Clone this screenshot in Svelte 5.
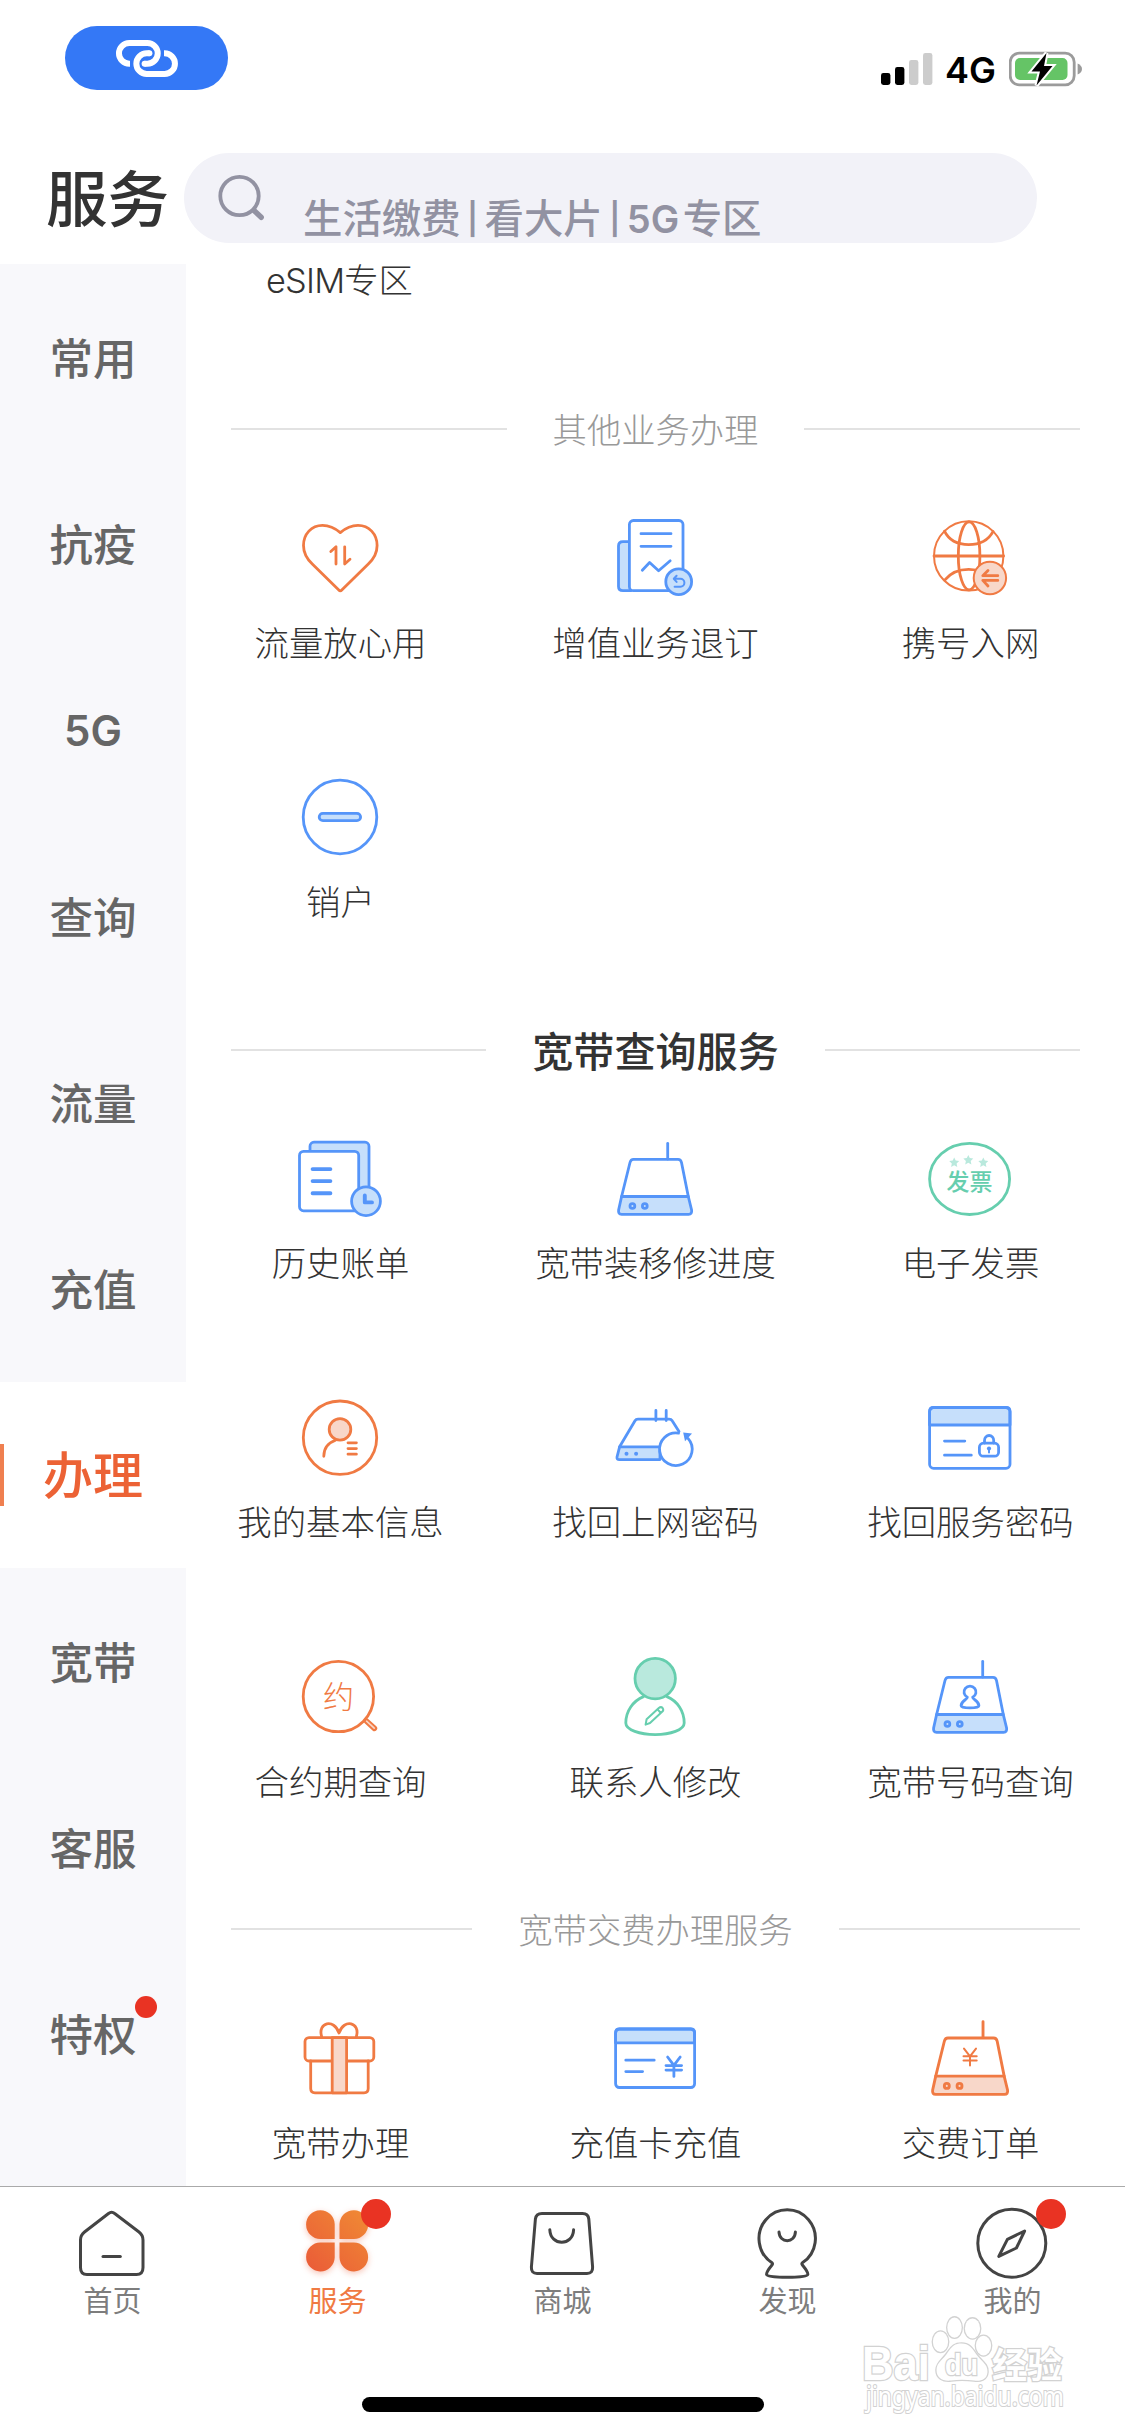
<script>
  const sidebar = ['常用', '抗疫', '5G', '查询', '流量', '充值', '办理', '宽带', '客服', '特权'];
  const active = '办理';

  const sections = [
    {
      title: '其他业务办理',
      items: [
        { icon: 'heart', label: '流量放心用' },
        { icon: 'docReturn', label: '增值业务退订' },
        { icon: 'globe', label: '携号入网' },
        { icon: 'minus', label: '销户' }
      ]
    },
    {
      title: '宽带查询服务',
      strong: true,
      items: [
        { icon: 'history', label: '历史账单' },
        { icon: 'router', label: '宽带装移修进度' },
        { icon: 'invoice', label: '电子发票' },
        { icon: 'profile', label: '我的基本信息' },
        { icon: 'routerReset', label: '找回上网密码' },
        { icon: 'lockCard', label: '找回服务密码' },
        { icon: 'contract', label: '合约期查询' },
        { icon: 'contact', label: '联系人修改' },
        { icon: 'routerUser', label: '宽带号码查询' }
      ]
    },
    {
      title: '宽带交费办理服务',
      items: [
        { icon: 'gift', label: '宽带办理' },
        { icon: 'payCard', label: '充值卡充值' },
        { icon: 'routerPay', label: '交费订单' }
      ]
    }
  ];

  const tabs = [
    { icon: 'home', label: '首页' },
    { icon: 'clover', label: '服务', on: true, dot: true },
    { icon: 'bag', label: '商城' },
    { icon: 'discover', label: '发现' },
    { icon: 'compass', label: '我的', dot: true }
  ];

  const star = 'M0-5 1.5-1.8 5-1.4 2.4 1 3.1 4.5 0 2.8-3.1 4.5-2.4 1-5-1.4-1.5-1.8Z';
</script>

{#snippet routerBody()}
  <path d="M12.6 63.5 H79.3 L82.6 77 Q83.2 81.3 79.6 81.3 H12.6 Q9 81.3 9.6 77 Z" class="tint" />
  <path d="M12.6 63.5 L21 29.5 Q21.8 26.3 24.5 26.3 H69 Q71.8 26.3 72.5 29.5 L79.3 63.5" />
  <path d="M58.7 10.5V26" />
  <circle cx="23.4" cy="73" r="2.4" />
  <circle cx="35.8" cy="73" r="2.4" />
{/snippet}

{#snippet icon(name)}
  {#if name === 'heart'}
    <svg class="ico orange" viewBox="0 0 90 90">
      <path d="M46.3 20.6C41 16 35 13.3 28.5 13.3 17.5 13.3 9.5 22 9.5 33.5 9.5 41 13 47 18.3 52L44.8 78Q46.3 79.6 47.8 78L74.3 52C79.6 47 83.1 41 83.1 33.5 83.1 22 75 13.3 64 13.3 57.5 13.3 51.6 16 46.3 20.6Z" />
      <path d="M36.8 39.5 42 34.8V52M50.7 34.8V52L56 47.3" />
    </svg>
  {:else if name === 'docReturn'}
    <svg class="ico blue" viewBox="0 0 90 90">
      <path class="tint" d="M20.5 29.7H14Q9.5 29.7 9.5 34V74.5Q9.5 78.7 14 78.7H22Z" />
      <rect class="paper" x="20.4" y="8.5" width="53.6" height="70.2" rx="4" />
      <path d="M32 21.7H62M32 34.3H62M33.3 58.2 40.6 50.5 49.6 58.8 61.2 48.8" />
      <circle class="tint" cx="69.7" cy="69.7" r="12.9" />
      <path d="M67.6 63.8 64.8 66.8 67.6 69.9M65.2 66.8H71.4A4 4 0 0 1 71.4 74.8H65.6" stroke-width="2" />
    </svg>
  {:else if name === 'globe'}
    <svg class="ico orange" viewBox="0 0 90 90">
      <circle class="thin" cx="44.7" cy="43.9" r="34.7" />
      <ellipse cx="45.1" cy="43.9" rx="10.8" ry="34" />
      <path d="M10 44H79.6M20.5 19.2Q27 32.6 44.7 32.6 62 32.6 69 19.6M21.2 67.7Q29.5 57.4 44.7 57.4 60 57.4 68 67" />
      <circle class="tint thin" cx="65.9" cy="66" r="16.2" />
      <path d="M73.8 63.7H58.8L64 58.4M73.8 68.4H58.8L64 74" />
    </svg>
  {:else if name === 'minus'}
    <svg class="ico blue" viewBox="0 0 90 90">
      <circle cx="46" cy="46" r="36.8" />
      <rect class="tint" x="25.2" y="42.3" width="41.4" height="7.4" rx="3.7" />
    </svg>
  {:else if name === 'history'}
    <svg class="ico blue" viewBox="0 0 90 90">
      <rect class="tint" x="16" y="9.2" width="59" height="62" rx="4" />
      <rect class="paper" x="5.5" y="18.4" width="59.2" height="59.4" rx="4" />
      <path class="thick" d="M18.6 36.1H36.4M18.6 48.1H36.4M18.6 60.2H36.4" />
      <circle class="tint" cx="72" cy="68.2" r="14.4" />
      <path class="thick" d="M70.8 62.5V69.4H78" />
    </svg>
  {:else if name === 'router'}
    <svg class="ico blue" viewBox="0 0 90 90">{@render routerBody()}</svg>
  {:else if name === 'invoice'}
    <svg class="ico green" viewBox="0 0 90 90">
      <ellipse cx="45.6" cy="45.9" rx="40" ry="35.6" />
      <g class="stars">
        <path d={star} transform="translate(30.2 29.4)" />
        <path d={star} transform="translate(44.3 26.9)" />
        <path d={star} transform="translate(59.3 29.4)" />
      </g>
      <text x="45.5" y="57" font-size="23" font-weight="500">发票</text>
    </svg>
  {:else if name === 'profile'}
    <svg class="ico orange" viewBox="0 0 90 90">
      <circle cx="46" cy="45.7" r="36.7" />
      <circle class="tint" cx="46" cy="37.4" r="10.8" />
      <path d="M29.8 64.3Q29.8 52.5 41.5 48.3M54 50.8H62.4M54 56.6H62.4M54 62.2H62.4" />
    </svg>
  {:else if name === 'routerReset'}
    <svg class="ico blue" viewBox="0 0 90 90">
      <path class="tint" d="M10.6 54.8H51V67.6H10.4Q7.6 67.6 8 65Z" />
      <path d="M10.6 54.8 26 28.8Q27 27.1 29 27.1H60Q62.2 27.1 63.2 28.8L70 39.5M46.9 18.5V28.6M57.2 18.5V28.6" />
      <path class="paper" d="M69.5 41.2A16.3 16.3 0 1 0 79 46.4" />
      <path class="solid bare" d="M74.2 40.4 83 41.6 76 49.2Z" />
      <circle class="solid bare" cx="17.5" cy="61.8" r="2" />
      <circle class="solid bare" cx="27.1" cy="61.8" r="2" />
    </svg>
  {:else if name === 'lockCard'}
    <svg class="ico blue" viewBox="0 0 90 90">
      <path class="tint" d="M5.6 33V19.4Q5.6 15.5 9.5 15.5H82Q86 15.5 86 19.4V33Z" />
      <rect x="5.6" y="15.5" width="80.4" height="60.8" rx="4" />
      <path d="M20.5 49.1H40.8M20.5 63.2H47.3M60.5 51V48.5A4.6 5 0 0 1 69.7 48.5V51" />
      <rect x="55.4" y="51.2" width="19.2" height="13" rx="4" />
      <circle class="solid bare" cx="65" cy="56.6" r="2.1" />
      <path class="thin" d="M65 57.5V60.6" />
    </svg>
  {:else if name === 'contract'}
    <svg class="ico orange" viewBox="0 0 90 90">
      <circle cx="44.4" cy="45.5" r="35.2" />
      <path class="handle" d="M72.6 70.2 80.4 77.4" />
      <path class="handle-core" d="M72.6 70.2 80.2 77.2" />
      <text x="44.6" y="57.3" font-size="31" font-weight="300">约</text>
    </svg>
  {:else if name === 'contact'}
    <svg class="ico green" viewBox="0 0 90 90">
      <path d="M34.5 45.6C24 50 16.8 60 16.8 72 16.8 79 31 83.6 46.2 83.6S75.2 79 75.2 72C75.2 60 68.4 50 57.9 45.6" />
      <circle class="tint" cx="46.2" cy="27.6" r="20.2" />
      <path class="thin" d="M36.6 73.6 37.6 68.2 49.8 57Q52 55.2 53.6 57 55 58.8 53.4 60.6L41 72ZM48.6 58.4 51.8 62" />
    </svg>
  {:else if name === 'routerUser'}
    <svg class="ico blue" viewBox="0 0 90 90">
      {@render routerBody()}
      <path d="M43.4 46.2A6 5.8 0 1 1 48.6 46.2C48.4 48.6 54.9 49.4 54.9 54.8 54.9 56 51 56.9 46 56.9S37.1 56 37.1 54.8C37.1 49.4 43.6 48.6 43.4 46.2Z" />
    </svg>
  {:else if name === 'gift'}
    <svg class="ico orange" viewBox="0 0 90 90">
      <path d="M16.7 49V76.5Q16.7 80.8 21 80.8H70Q74.2 80.8 74.2 76.5V49" />
      <rect x="11" y="25.6" width="68.8" height="23.4" rx="4" />
      <rect class="tint" x="38.2" y="25.6" width="14.4" height="55.2" />
      <path d="M27.6 24.5C23.5 10.5 40 6 45 21 50 6 66.5 10.5 62.4 24.5" />
    </svg>
  {:else if name === 'payCard'}
    <svg class="ico blue" viewBox="0 0 90 90">
      <path class="tint" d="M6.6 30.9V20.8Q6.6 17 10.4 17H81.8Q85.6 17 85.6 20.8V30.9Z" />
      <rect x="6.6" y="17" width="79" height="58.5" rx="3.8" />
      <path d="M16.8 48.2H45.2M16.8 59.6H33.6" />
      <path d="M58.6 45 64.9 53.4 71.2 45M64.9 53.4V64.4M57 53.6H72.6M57 58.1H72.6" />
    </svg>
  {:else if name === 'routerPay'}
    <svg class="ico orange" viewBox="0 0 90 90">
      <g transform="translate(-1.2 -1) scale(1.026 1.026)">{@render routerBody()}</g>
      <path class="thin" d="M40 36.6 46 44.4 52 36.6M46 44.4V53.4M39.5 44.2H52.7M39.5 48.6H52.7" />
    </svg>
  {/if}
{/snippet}

{#snippet tabIcon(name)}
  <svg class="tab-ico" viewBox="0 0 80 80">
    {#if name === 'home'}
      <path d="M36.5 10.5Q39.6 8 42.7 10.5L67 29Q71 32.2 71 37V64.5Q71 71.5 64.5 71.5H15Q8.5 71.5 8.5 64.5V37Q8.5 32.2 12.5 29Z" />
      <path d="M31 53.4H48.3" />
    {:else if name === 'clover'}
      <defs>
        <linearGradient id="petals" gradientUnits="userSpaceOnUse" x1="10" y1="70" x2="70" y2="8">
          <stop offset="0" stop-color="#ea5a38" />
          <stop offset="1" stop-color="#f08a34" />
        </linearGradient>
      </defs>
      <g class="petals" fill="url(#petals)" stroke="none">
        <path d="M37.7 36V21A14.3 14.4 0 1 0 23.3 36Z" />
        <path d="M42.5 36V21A14.3 14.4 0 1 1 56.9 36Z" />
        <path d="M37.7 39.6V54.5A14.3 14.4 0 1 1 23.3 39.6Z" />
        <path d="M42.5 39.6V54.5A14.3 14.4 0 1 0 56.9 39.6Z" />
      </g>
    {:else if name === 'bag'}
      <path d="M20 10.4H60.5Q66.3 10.4 66.8 16L70.6 64Q71 70.5 65 70.5H15Q9 70.5 9.4 64L13.4 16Q14 10.4 20 10.4Z" />
      <path d="M27.8 26.8C28.5 43.5 51 43.5 51.6 26.8" />
    {:else if name === 'discover'}
      <path d="M25 59.8A28.2 28.8 0 1 1 55.4 59.8Q54.4 60.8 55.4 62C57 64 61.4 69 60.8 71.5 60 75.3 20.4 75.3 19.6 71.5 19 69 23.4 64 25 62Q26 60.8 25 59.8Z" />
      <path d="M32 29C32.4 40.5 48 40.5 48.4 29" />
    {:else}
      <circle cx="39.8" cy="40.2" r="34" />
      <path d="M52.6 28 44.4 45 26.8 53.4 35.4 36.4Z" />
    {/if}
  </svg>
{/snippet}

<div class="screen">
  <div class="status">
    <div class="hotspot">
      <svg width="64" height="40" viewBox="0 0 64 40">
        <g fill="none" stroke="#fff" stroke-width="6">
          <path d="M15 25.700H14.300A10.300 10.300 0 0 1 14.300 5H32.400A10.300 10.300 0 0 1 32.400 25.700H29.500" />
          <path d="M49 15.300H49.600A10.300 10.300 0 0 1 49.600 36H31.700A10.300 10.300 0 0 1 31.700 15.300H34.600" />
        </g>
        <circle cx="29.600" cy="25.700" r="3" fill="#fff" />
        <circle cx="34.400" cy="15.300" r="3" fill="#fff" />
      </svg>
    </div>
    <div class="signals">
      <svg width="52" height="34" viewBox="0 0 52 34">
        <rect x="0" y="21" width="9.4" height="12" rx="2.4" />
        <rect x="14" y="15" width="9.4" height="18" rx="2.4" />
        <rect x="28" y="8" width="9.4" height="25" rx="2.4" fill="#ccc" />
        <rect x="42" y="1" width="9.4" height="32" rx="2.4" fill="#ccc" />
      </svg>
      <span class="net">4G</span>
      <svg width="74" height="38" viewBox="0 0 74 38">
        <rect x="1.2" y="3.2" width="64" height="31.6" rx="9" fill="none" stroke="#9b9b9b" stroke-width="2.8" />
        <rect x="6" y="8" width="52.5" height="22" rx="5" fill="#65c466" />
        <path d="M68.6 13.5Q73 15.5 73 19T68.6 24.5Z" fill="#9b9b9b" />
        <path d="M37.5 3 22.5 21.5H31L27.5 35.5 43.5 16H35Z" fill="#000" stroke="#fff" stroke-width="4" paint-order="stroke" />
      </svg>
    </div>
  </div>

  <header>
    <h1>服务</h1>
    <div class="search">
      <svg width="48" height="48" viewBox="0 0 48 48">
        <circle cx="21.5" cy="22" r="19.2" fill="none" stroke="#9292a2" stroke-width="3.8" />
        <path d="M36 36.500 43.200 43.300" stroke="#9292a2" stroke-width="5.400" stroke-linecap="round" />
      </svg>
      <span class="hint">生活缴费<i>|</i>看大片<i>|</i><b>5G</b>专区</span>
    </div>
  </header>

  <div class="body">
    <nav class="side">
      {#each sidebar as name}
        <div class="side-item" class:active={name === active} class:latin={name === '5G'}>
          <span>{name}{#if name === '特权'}<em class="dot small"></em>{/if}</span>
        </div>
      {/each}
    </nav>

    <main>
      <div class="cut-row"><b>eSIM</b>专区</div>
      {#each sections as section}
        <section>
          <h2 class:strong={section.strong}><span>{section.title}</span></h2>
          <div class="grid">
            {#each section.items as item}
              <div class="cell">
                {@render icon(item.icon)}
                <p>{item.label}</p>
              </div>
            {/each}
          </div>
        </section>
      {/each}
    </main>
  </div>

  <footer>
    <div class="tabs">
      {#each tabs as tab}
        <div class="tab" class:on={tab.on}>
          <div class="tab-pic">
            {@render tabIcon(tab.icon)}
            {#if tab.dot}<em class="dot"></em>{/if}
          </div>
          <span>{tab.label}</span>
        </div>
      {/each}
    </div>
    <div class="home-bar"></div>
    <svg class="watermark" width="212" height="110" viewBox="0 0 212 110">
      <g fill="#fff" stroke="#d2d2d2" stroke-width="2.6">
        <text x="6" y="64" font-size="48" font-weight="700" textLength="68" lengthAdjust="spacingAndGlyphs">Bai</text>
        <ellipse cx="84.500" cy="25.700" rx="7.600" ry="10.200" />
        <ellipse cx="98.500" cy="11.600" rx="7.200" ry="10.200" />
        <ellipse cx="116.500" cy="12.400" rx="7.600" ry="10" />
        <ellipse cx="127.500" cy="29.600" rx="7.600" ry="9.800" />
        <path d="M105.500 27.500C113 27.500 116 32 120 38 125 45 132 48 131.500 56 131 64 124 65.500 118 64.500 110 63.500 102 63.500 95 64.500 87 65.500 80.500 62 80.500 54 80.500 46 88 43 92 36 96 30 99 27.500 105.500 27.500Z" />
        <text x="89" y="59" font-size="30" font-weight="700" textLength="33" lengthAdjust="spacingAndGlyphs">du</text>
        <text x="136" y="62" font-size="35" font-weight="700" class="cjk">经验</text>
        <text x="10" y="90" font-size="27" stroke-width="2.200" class="url" textLength="198" lengthAdjust="spacingAndGlyphs">jingyan.baidu.com</text>
      </g>
    </svg>
  </footer>
</div>

<style>
  :global(body) {
    background: #fff;
  }

  .screen {
    width: 1125px;
    height: 2436px;
    display: flex;
    flex-direction: column;
    overflow: hidden;
    background: #fff;
    color: #333;
    font-family: 'Inter', 'Noto Sans CJK SC', sans-serif;
  }

  .status {
    height: 153px;
    flex: none;
    display: flex;
    justify-content: space-between;
    align-items: flex-start;
    box-sizing: border-box;
    padding: 26px 42px 0 65px;
  }

  .hotspot {
    width: 163px;
    height: 64px;
    border-radius: 32px;
    background: #3478f6;
    display: flex;
    align-items: center;
    justify-content: center;
  }

  .signals {
    display: flex;
    align-items: center;
    height: 38px;
    margin-top: 24px;
  }

  .net {
    font-size: 36px;
    font-weight: 600;
    line-height: 38px;
    color: #000;
    margin: 2px 13px 0 12px;
  }

  header {
    height: 111px;
    flex: none;
    display: flex;
    align-items: flex-start;
    padding-left: 46px;
  }

  h1 {
    margin: 3px 14px 0 0;
    width: 124px;
    font-size: 61.5px;
    font-weight: 500;
    line-height: 88px;
    white-space: nowrap;
  }

  .search {
    width: 853px;
    height: 90px;
    box-sizing: border-box;
    border-radius: 45px;
    background: #f2f2f8;
    display: flex;
    align-items: flex-start;
    padding: 21px 0 0 34px;
  }

  .hint {
    display: flex;
    align-items: center;
    margin: 20px 0 0 37px;
    color: #9292a2;
    font-size: 39.4px;
    font-weight: 500;
    line-height: 50px;
  }

  .hint i {
    font-style: normal;
    font-size: 31px;
    font-weight: 600;
    width: 24px;
    text-align: center;
  }

  .hint b {
    font-weight: 600;
    font-size: 38px;
    width: 56px;
  }

  .body {
    height: 1922px;
    flex: none;
    display: flex;
    overflow: hidden;
  }

  .side {
    width: 186px;
    flex: none;
    background: #f8f8fb;
  }

  .side-item {
    height: 186.3px;
    box-sizing: border-box;
    padding-top: 3px;
    display: flex;
    align-items: center;
    justify-content: center;
    font-size: 43.5px;
    font-weight: 500;
    line-height: 60px;
    color: #666;
  }

  .side-item span {
    position: relative;
  }

  .side-item.latin {
    font-weight: 600;
    font-size: 42px;
  }

  .side-item.active {
    background: linear-gradient(#ef7f50, #ef7f50) left center / 4px 62px no-repeat #fff;
    color: #ec6235;
    font-size: 50px;
  }

  .dot {
    position: absolute;
    left: 64px;
    top: -4px;
    width: 30px;
    height: 30px;
    border-radius: 50%;
    background: #e93323;
  }

  .dot.small {
    left: 85px;
    top: -9px;
    width: 22px;
    height: 22px;
  }

  main {
    flex: 1;
    min-width: 0;
  }

  .cut-row {
    height: 114px;
    box-sizing: border-box;
    padding: 1px 0 0 80px;
    font-size: 34.3px;
    font-weight: 300;
    line-height: 32px;
  }

  .cut-row b {
    font-weight: 300;
    letter-spacing: -0.8px;
  }

  h2 {
    margin: 0;
    height: 102px;
    padding: 0 45px;
    display: flex;
    align-items: center;
    gap: 46px;
    font-size: 34.3px;
    font-weight: 300;
    line-height: 48px;
    color: #999;
  }

  h2 span {
    padding-top: 4px;
  }

  h2::before,
  h2::after {
    content: '';
    flex: 1;
    height: 2px;
    background: #e2e2e2;
  }

  h2.strong {
    font-size: 41.1px;
    font-weight: 500;
    color: #333;
  }

  .grid {
    display: grid;
    grid-template-columns: repeat(3, 315px);
    grid-auto-rows: 259.3px;
    justify-content: center;
  }

  .cell {
    display: flex;
    flex-direction: column;
    align-items: center;
    padding-top: 32px;
  }

  .cell p {
    margin: 17.6px 0 0;
    font-size: 34.4px;
    font-weight: 300;
    line-height: 48px;
    white-space: nowrap;
  }

  .ico {
    width: 90px;
    height: 90px;
    margin-left: -3px;
    fill: none;
    stroke: currentColor;
    stroke-width: 2.8;
    stroke-linecap: round;
    stroke-linejoin: round;
  }

  .ico text {
    fill: currentColor;
    stroke: none;
    text-anchor: middle;
    font-family: 'Noto Sans CJK SC', sans-serif;
  }

  .blue {
    color: #5595f9;
    --tint: #c6dffb;
  }

  .orange {
    color: #f07a43;
    --tint: #f8d7c9;
  }

  .green {
    color: #66ceae;
    --tint: #b9e9dd;
  }

  .tint {
    fill: var(--tint);
  }

  .paper {
    fill: #fff;
  }

  .solid {
    fill: currentColor;
  }

  .bare {
    stroke: none;
  }

  .thin {
    stroke-width: 2;
  }

  .thick {
    stroke-width: 3.9;
  }

  .handle {
    stroke-width: 5.6;
  }

  .handle-core {
    stroke: var(--tint);
    stroke-width: 1.6;
  }

  .stars {
    fill: var(--tint);
    stroke: none;
  }

  footer {
    position: relative;
    flex: 1;
    border-top: 1px solid #aaa;
    background: #fff;
  }

  .tabs {
    display: flex;
    height: 210px;
  }

  .tab {
    width: 225px;
    display: flex;
    flex-direction: column;
    align-items: center;
    padding-top: 16px;
    color: #7d7d7d;
    font-size: 29px;
    font-weight: 400;
    line-height: 38px;
  }

  .tab.on {
    color: #f07a43;
  }

  .tab-pic {
    position: relative;
    width: 80px;
    height: 80px;
    margin-left: -1px;
  }

  .tab-ico {
    display: block;
    width: 80px;
    height: 80px;
    overflow: visible;
    fill: none;
    stroke: #444;
    stroke-width: 3;
    stroke-linecap: round;
    stroke-linejoin: round;
  }

  .petals {
    filter: drop-shadow(0 2px 3px rgba(236, 90, 50, 0.35));
  }

  .home-bar {
    width: 402px;
    height: 15px;
    margin: 0 auto;
    border-radius: 8px;
    background: #000;
  }

  .watermark {
    position: absolute;
    left: 856px;
    top: 129px;
    overflow: visible;
    font-family: 'Liberation Sans', sans-serif;
    paint-order: stroke;
  }

  .watermark .cjk {
    font-family: 'Noto Sans CJK SC', sans-serif;
  }

  .watermark .url {
    font-family: 'Noto Sans', sans-serif;
  }
</style>
